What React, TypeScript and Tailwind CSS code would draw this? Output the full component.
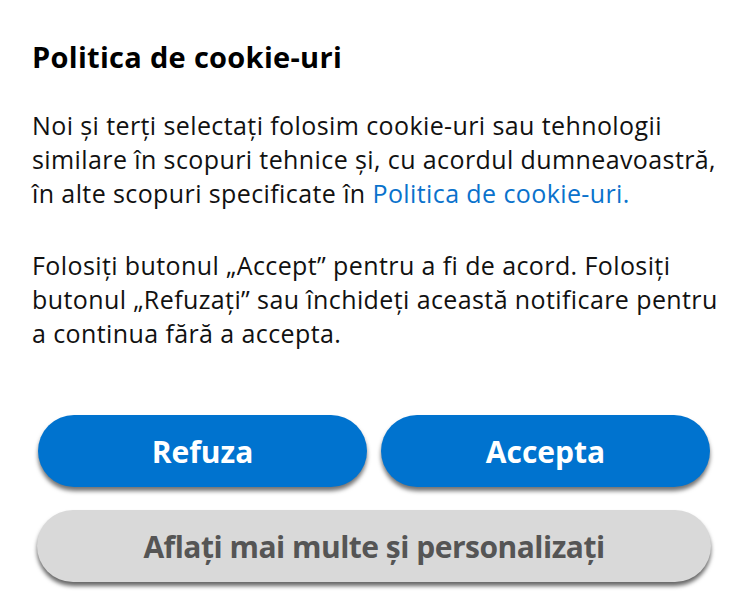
export default function App() {
  return (
    <div className="w-[750px] h-[616px] bg-white font-['Open_Sans',sans-serif]">
      <div className="px-[32px] pt-[37px] whitespace-nowrap">
        <h2 className="text-[29px] font-bold leading-[40px] tracking-[0.3px] text-black">Politica de cookie-uri</h2>
        <div className="mt-[31px] text-[25px] leading-[34px] tracking-[0.4px] text-[#111]">
          <p>
            Noi și terți selectați folosim cookie-uri sau tehnologii
            <br />
            similare în scopuri tehnice și, cu acordul dumneavoastră,
            <br />
            în alte scopuri specificate în <a className="text-[#0a72cc]">Politica de cookie-uri.</a>
          </p>
          <p className="mt-[38px]">
            Folosiți butonul „Accept” pentru a fi de acord. Folosiți
            <br />
            butonul „Refuzați” sau închideți această notificare pentru
            <br />a continua fără a accepta.
          </p>
        </div>
      </div>
      <div className="pl-[38px] pr-[40px] mt-[65px] flex flex-col gap-[23px]">
        <div className="flex gap-[14px]">
          <button className="flex-1 h-[72px] rounded-full bg-[#0073cf] text-white text-[30px] font-bold shadow-[0_4px_4px_rgba(0,0,0,0.55)]">
            Refuza
          </button>
          <button className="flex-1 h-[72px] rounded-full bg-[#0073cf] text-white text-[30px] font-bold shadow-[0_4px_4px_rgba(0,0,0,0.55)]">
            Accepta
          </button>
        </div>
        <button className="-ml-px -mr-px h-[72px] rounded-full bg-[#d9d9d9] text-[#555] text-[30px] font-bold tracking-[-0.5px] shadow-[0_4px_4px_rgba(0,0,0,0.6)]">
          Aflați mai multe și personalizați
        </button>
      </div>
    </div>
  )
}
